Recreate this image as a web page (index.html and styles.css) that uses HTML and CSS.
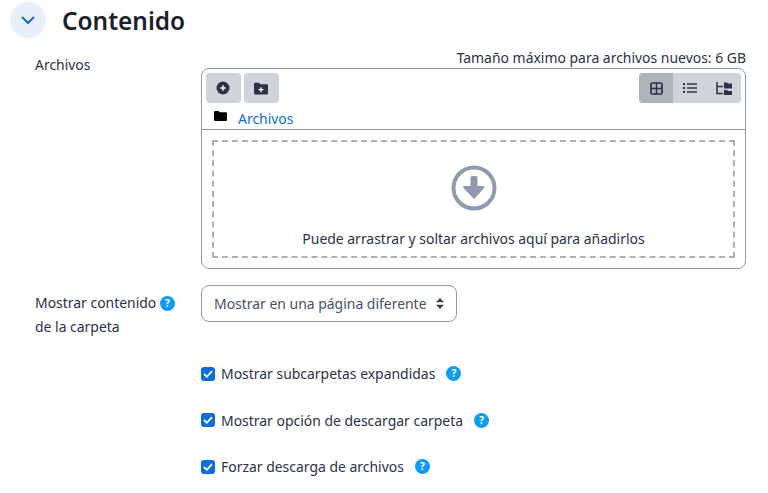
FILE: index.html
```html
<!DOCTYPE html>
<html lang="es">
<head>
<meta charset="utf-8">
<title>Contenido</title>
<link rel="stylesheet" href="styles.css">
</head>
<body>
<div class="page">
  <header class="section-head">
    <span class="collapse-btn">
      <svg width="14" height="9" viewBox="0 0 14 9"><path d="M1.500 1.500 7 7l5.500-5.500" fill="none" stroke="#0f5fd0" stroke-width="1.800" stroke-linecap="round" stroke-linejoin="round"/></svg>
    </span>
    <h2 class="section-title">Contenido</h2>
  </header>

  <div class="form-row files-row">
    <div class="label-col"><span class="label-text files-label">Archivos</span></div>
    <div class="field-col">
      <div class="max-size">Tamaño máximo para archivos nuevos: 6 GB</div>
      <div class="picker">
        <div class="toolbar">
          <div class="tool-left">
            <span class="tool-btn">
              <svg width="14" height="14" viewBox="0 0 14 14"><circle cx="7" cy="7" r="6.500" fill="#2b3147"/><path d="M7 4.200v5.600M4.200 7h5.600" stroke="#fff" stroke-width="1.400"/></svg>
            </span>
            <span class="tool-btn">
              <svg width="14" height="13" viewBox="0 0 14 13"><path d="M0 2a1.300 1.300 0 0 1 1.300-1.300h3.600L6.400 2.300h6.300A1.300 1.300 0 0 1 14 3.600v7.700a1.300 1.300 0 0 1-1.300 1.300H1.300A1.300 1.300 0 0 1 0 11.300z" fill="#2b3147"/><path d="M7 5.200v5M4.500 7.700h5" stroke="#fff" stroke-width="1.300"/></svg>
            </span>
          </div>
          <div class="view-group">
            <span class="view-btn active">
              <svg width="13" height="13" viewBox="0 0 13 13"><rect x="1" y="1" width="11" height="11" rx="1.500" fill="none" stroke="#2b3147" stroke-width="1.700"/><path d="M6.500 1v11M1 6.500h11" stroke="#2b3147" stroke-width="1.500"/></svg>
            </span>
            <span class="view-btn">
              <svg width="14" height="12" viewBox="0 0 14 12"><path d="M0 2h2M0 6h2M0 10h2" stroke="#2b3147" stroke-width="1.800"/><path d="M4 2h10M4 6h10M4 10h10" stroke="#2b3147" stroke-width="1.400"/></svg>
            </span>
            <span class="view-btn">
              <svg width="16" height="13" viewBox="0 0 16 13"><path d="M1 0v11.500h6M1 4.500h6" fill="none" stroke="#2b3147" stroke-width="1.500"/><path d="M8 .5h3l1 1h4v5H8zM8 8h3l1 1h4v4H8z" fill="#2b3147"/></svg>
            </span>
          </div>
        </div>
        <div class="path-row">
          <svg class="path-icon" width="13" height="10" viewBox="0 0 13 10"><path d="M0 1.200A1.200 1.200 0 0 1 1.200 0h3.300l1.300 1.300h6A1.200 1.200 0 0 1 13 2.500v6.300A1.200 1.200 0 0 1 11.800 10H1.200A1.200 1.200 0 0 1 0 8.800z" fill="#000"/></svg>
          <a class="path-link" href="#">Archivos</a>
        </div>
        <div class="drop-wrap">
          <div class="drop-zone">
            <svg class="drop-icon" width="46" height="46" viewBox="0 0 46 46"><circle cx="23" cy="23" r="20.500" fill="none" stroke="#8f99b0" stroke-width="4"/><path d="M19.500 12.500a1.500 1.500 0 0 1 1.500-1.500h4a1.500 1.500 0 0 1 1.500 1.500V21h5.800c1 0 1.500 1.200.8 1.900L24 33a1.400 1.400 0 0 1-2 0L12.400 22.900c-.7-.7-.2-1.900.8-1.900h6.300z" fill="#8f99b0"/></svg>
            <div class="drop-text">Puede arrastrar y soltar archivos aquí para añadirlos</div>
          </div>
        </div>
      </div>
    </div>
  </div>

  <div class="form-row select-row">
    <div class="label-col">
      <span class="label-text">Mostrar contenido <span class="help help-inline">?</span><br>de la carpeta</span>
    </div>
    <div class="field-col">
      <div class="select-box">
        <span>Mostrar en una página diferente</span>
        <svg width="8" height="11" viewBox="0 0 8 11"><path d="M4 0 8 4.300H0zM4 11 0 6.700h8z" fill="#3a4154"/></svg>
      </div>
    </div>
  </div>

  <div class="check-list">
    <div class="check-row">
      <span class="checkbox"><svg width="10" height="8" viewBox="0 0 10 8"><path d="m1 4 2.800 2.800L9 1.200" fill="none" stroke="#fff" stroke-width="1.800"/></svg></span>
      <span class="check-label">Mostrar subcarpetas expandidas</span>
      <span class="help">?</span>
    </div>
    <div class="check-row">
      <span class="checkbox"><svg width="10" height="8" viewBox="0 0 10 8"><path d="m1 4 2.800 2.800L9 1.200" fill="none" stroke="#fff" stroke-width="1.800"/></svg></span>
      <span class="check-label">Mostrar opción de descargar carpeta</span>
      <span class="help">?</span>
    </div>
    <div class="check-row">
      <span class="checkbox"><svg width="10" height="8" viewBox="0 0 10 8"><path d="m1 4 2.800 2.800L9 1.200" fill="none" stroke="#fff" stroke-width="1.800"/></svg></span>
      <span class="check-label">Forzar descarga de archivos</span>
      <span class="help">?</span>
    </div>
  </div>
</div>
</body>
</html>
```

FILE: styles.css
```css
html, body {
  margin: 0;
  padding: 0;
  background: #fff;
  overflow: hidden;
}
body {
  font-family: "Noto Sans", "Open Sans", sans-serif;
  font-size: 13.950px;
  line-height: 23px;
  color: #1d2125;
}
.page {
  width: 768px;
  height: 493px;
  overflow: hidden;
  box-sizing: border-box;
  padding: 2px 22px 0 10px;
}
.section-head {
  display: flex;
  align-items: center;
  gap: 16px;
  height: 36px;
}
.collapse-btn {
  width: 36px;
  height: 36px;
  border-radius: 50%;
  background: #e7effb;
  display: flex;
  align-items: center;
  justify-content: center;
}
.section-title {
  margin: 2px 0 0;
  font-size: 24.400px;
  line-height: 36px;
  font-weight: 600;
  color: #1d2125;
}
.form-row {
  display: flex;
}
.label-col {
  width: 166px;
  padding-left: 25px;
  flex: none;
}
.field-col {
  width: 545px;
  flex: none;
}
.label-text {
  color: #2b3147;
  display: block;
}
.files-row {
  margin-top: 9px;
}
.files-label {
  margin-top: 6px;
}
.max-size {
  text-align: right;
  height: 21px;
  line-height: 21px;
  color: #2b3147;
}
.picker {
  height: 201px;
  box-sizing: border-box;
  border: 1px solid #8f99b0;
  border-radius: 8px;
  display: flex;
  flex-direction: column;
}
.toolbar {
  display: flex;
  justify-content: space-between;
  padding: 4px 4px 0;
}
.tool-left {
  display: flex;
  gap: 3.500px;
}
.tool-btn {
  width: 34.500px;
  height: 30px;
  background: #ced4da;
  border-radius: 4px;
  display: flex;
  align-items: center;
  justify-content: center;
}
.view-group {
  display: flex;
  border-radius: 4px;
  overflow: hidden;
  background: #ced4da;
}
.view-btn {
  width: 34px;
  height: 30px;
  display: flex;
  align-items: center;
  justify-content: center;
}
.view-btn.active {
  background: #adb5bd;
}
.path-row {
  height: 26px;
  display: flex;
  align-items: center;
  border-bottom: 1px solid #8f99b0;
  padding-left: 12px;
  gap: 11px;
}
.path-link {
  color: #0f6cdb;
  text-decoration: none;
  line-height: 25px;
  padding-top: 4px;
}
.drop-wrap {
  padding: 10px 10px 10px;
}
.drop-zone {
  height: 118px;
  box-sizing: border-box;
  border: 2px dashed #adb1b7;
  display: flex;
  flex-direction: column;
  align-items: center;
  color: #2b3147;
}
.drop-icon {
  margin-top: 23px;
}
.drop-text {
  margin-top: 16px;
}
.select-row {
  margin-top: 16px;
}
.select-row .label-col {
  padding-top: 6px;
}
.select-row .label-text {
  line-height: 24px;
}
.help {
  display: inline-flex;
  align-items: center;
  justify-content: center;
  width: 15px;
  height: 15px;
  border-radius: 50%;
  background: #0f9bf0;
  color: #fff;
  font-size: 10px;
  font-weight: 700;
  line-height: 15px;
}
.help-inline {
  vertical-align: 1px;
}
.select-box {
  width: 256px;
  height: 37px;
  box-sizing: border-box;
  border: 1px solid #8f99b0;
  border-radius: 8px;
  padding: 0 12px;
  display: flex;
  align-items: center;
  justify-content: space-between;
  color: #495068;
}
.check-list {
  margin-top: 23px;
  margin-left: 191px;
  display: flex;
  flex-direction: column;
  gap: 23.500px;
}
.check-row {
  display: flex;
  align-items: center;
  height: 23px;
  color: #2b3147;
}
.checkbox {
  width: 14px;
  height: 14px;
  background: #0f6cdb;
  border-radius: 3px;
  display: flex;
  align-items: center;
  justify-content: center;
  margin-right: 6px;
}
.check-label {
  margin-right: 11px;
}
```
